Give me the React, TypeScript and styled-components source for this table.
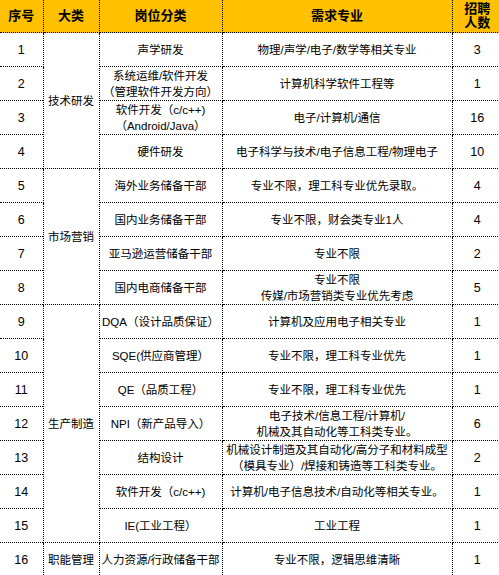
import styled, { createGlobalStyle } from "styled-components";

const GlobalStyle = createGlobalStyle`
  html, body {
    margin: 0;
    padding: 0;
    background: #ffffff;
    overflow: hidden;
  }
`;

const Table = styled.table`
  border-collapse: collapse;
  table-layout: fixed;
  width: 502px;
  font-family: "Liberation Sans", "Noto Sans CJK SC", sans-serif;
  font-size: 11.5px;
  color: #000000;
`;

const HeadCell = styled.th`
  height: 32px;
  padding: 0;
  background: #ffc000;
  font-size: 13px;
  font-weight: bold;
  line-height: 14px;
  text-align: center;
  vertical-align: middle;
  border: 1px dotted #000000;
  border-top: none;
  &:first-child {
    border-left: none;
  }
  &:last-child {
    border-right: none;
  }
`;

const Cell = styled.td`
  height: 33px;
  padding: 0;
  line-height: 16px;
  text-align: center;
  vertical-align: middle;
  white-space: nowrap;
  overflow: visible;
  border: 1px dotted #000000;
  &:first-child {
    border-left: none;
  }
  &:last-child {
    border-right: none;
  }
`;

const Num = styled.span`
  font-size: 12.5px;
`;

interface IRow {
  no: number;
  group?: { name: string; span: number };
  post: string[];
  major: string[];
  count: number;
}

const rows: IRow[] = [
  { no: 1, group: { name: "技术研发", span: 4 }, post: ["声学研发"], major: ["物理/声学/电子/数学等相关专业"], count: 3 },
  { no: 2, post: ["系统运维/软件开发", "（管理软件开发方向）"], major: ["计算机科学软件工程等"], count: 1 },
  { no: 3, post: ["软件开发（c/c++)", "（Android/Java）"], major: ["电子/计算机/通信"], count: 16 },
  { no: 4, post: ["硬件研发"], major: ["电子科学与技术/电子信息工程/物理电子"], count: 10 },
  { no: 5, group: { name: "市场营销", span: 4 }, post: ["海外业务储备干部"], major: ["专业不限，理工科专业优先录取。"], count: 4 },
  { no: 6, post: ["国内业务储备干部"], major: ["专业不限，财会类专业1人"], count: 4 },
  { no: 7, post: ["亚马逊运营储备干部"], major: ["专业不限"], count: 2 },
  { no: 8, post: ["国内电商储备干部"], major: ["专业不限", "传媒/市场营销类专业优先考虑"], count: 5 },
  { no: 9, group: { name: "生产制造", span: 7 }, post: ["DQA（设计品质保证）"], major: ["计算机及应用电子相关专业"], count: 1 },
  { no: 10, post: ["SQE(供应商管理）"], major: ["专业不限，理工科专业优先"], count: 1 },
  { no: 11, post: ["QE（品质工程）"], major: ["专业不限，理工科专业优先"], count: 1 },
  { no: 12, post: ["NPI（新产品导入）"], major: ["电子技术/信息工程/计算机/", "机械及其自动化等工科类专业。"], count: 6 },
  { no: 13, post: ["结构设计"], major: ["机械设计制造及其自动化/高分子和材料成型", "（模具专业）/焊接和铸造等工科类专业。"], count: 2 },
  { no: 14, post: ["软件开发（c/c++)"], major: ["计算机/电子信息技术/自动化等相关专业。"], count: 1 },
  { no: 15, post: ["IE(工业工程）"], major: ["工业工程"], count: 1 },
  { no: 16, group: { name: "职能管理", span: 1 }, post: ["人力资源/行政储备干部"], major: ["专业不限，逻辑思维清晰"], count: 1 },
];

function Lines({ lines }: { lines: string[] }) {
  return (
    <>
      {lines.map((line, i) => (
        <div key={i}>{line}</div>
      ))}
    </>
  );
}

export default function App() {
  return (
    <>
      <GlobalStyle />
      <Table>
        <colgroup>
          <col style={{ width: 43 }} />
          <col style={{ width: 56 }} />
          <col style={{ width: 123 }} />
          <col style={{ width: 230 }} />
          <col style={{ width: 50 }} />
        </colgroup>
        <thead>
          <tr>
            <HeadCell>序号</HeadCell>
            <HeadCell>大类</HeadCell>
            <HeadCell>岗位分类</HeadCell>
            <HeadCell>需求专业</HeadCell>
            <HeadCell>
              招聘
              <br />
              人数
            </HeadCell>
          </tr>
        </thead>
        <tbody>
          {rows.map((row) => (
            <tr key={row.no}>
              <Cell>
                <Num>{row.no}</Num>
              </Cell>
              {row.group && <Cell rowSpan={row.group.span}>{row.group.name}</Cell>}
              <Cell>
                <Lines lines={row.post} />
              </Cell>
              <Cell>
                <Lines lines={row.major} />
              </Cell>
              <Cell>
                <Num>{row.count}</Num>
              </Cell>
            </tr>
          ))}
        </tbody>
      </Table>
    </>
  );
}
